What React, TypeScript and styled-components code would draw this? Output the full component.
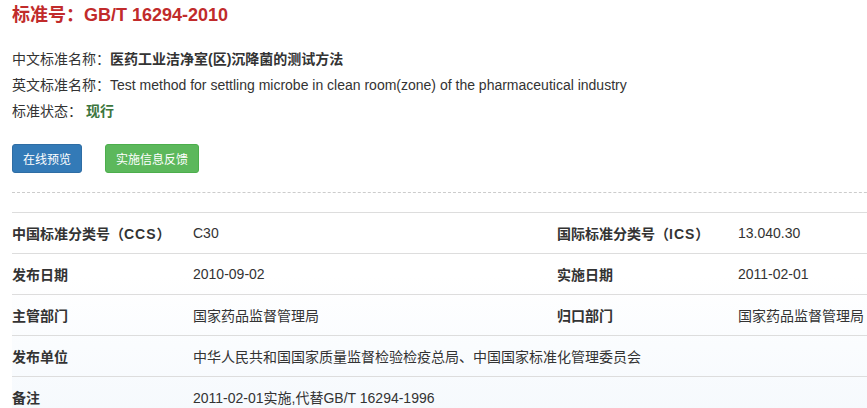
import React from 'react';
import styled, { createGlobalStyle } from 'styled-components';

const GlobalStyle = createGlobalStyle`
  html, body {
    margin: 0;
    padding: 0;
    background: #fff;
    overflow: hidden;
  }
  body {
    font-family: "Liberation Sans", Arial, "Noto Sans CJK SC", sans-serif;
    color: #333;
    font-size: 14px;
  }
`;

const Page = styled.div`
  width: 867px;
  height: 408px;
  overflow: hidden;
  padding-left: 12px;
  box-sizing: border-box;
`;

const Title = styled.h3`
  margin: 0;
  font-size: 18px;
  line-height: 30px;
  font-weight: bold;
  color: #c12b2b;
`;

const InfoList = styled.div`
  margin-top: 16px;
`;

const InfoLine = styled.div`
  line-height: 26px;
  white-space: nowrap;
`;

const Strong = styled.span<{ $color?: string }>`
  font-weight: bold;
  color: ${({ $color }) => $color || '#333'};
`;

const Actions = styled.div`
  display: flex;
  gap: 23px;
  margin-top: 20px;
`;

const Button = styled.button<{ $variant: 'primary' | 'success' }>`
  height: 29px;
  padding: 0 10px;
  font-family: inherit;
  font-size: 12px;
  color: #fff;
  border-radius: 3px;
  cursor: pointer;
  background: ${({ $variant }) => ($variant === 'primary' ? '#337ab7' : '#5cb85c')};
  border: 1px solid ${({ $variant }) => ($variant === 'primary' ? '#2e6da4' : '#4cae4c')};
`;

const Divider = styled.hr`
  margin: 19px 0 0;
  border: 0;
  border-top: 1px dashed #ccc;
  width: 900px;
`;

const Table = styled.table`
  margin-top: 19px;
  border-collapse: collapse;
  width: 1000px;
  table-layout: fixed;
`;

const Body = styled.tbody`
  background: linear-gradient(to bottom, #fff 0%, #fff 30%, #f5f9fd 100%);
`;

const Row = styled.tr`
  height: 41px;
  border-top: 1px solid #ddd;
`;

const Cell = styled.td<{ $label?: boolean }>`
  padding: 0;
  vertical-align: middle;
  font-weight: ${({ $label }) => ($label ? 'bold' : 'normal')};
  color: #333;
  white-space: nowrap;
`;

const Spaced = styled.span`
  letter-spacing: 1px;
`;

export default function App() {
  return (
    <Page>
      <GlobalStyle />
      <Title>标准号：GB/T 16294-2010</Title>
      <InfoList>
        <InfoLine>
          中文标准名称：<Strong>医药工业洁净室(区)沉降菌的测试方法</Strong>
        </InfoLine>
        <InfoLine>
          英文标准名称：Test method for settling microbe in clean room(zone) of the pharmaceutical industry
        </InfoLine>
        <InfoLine>
          标准状态：&nbsp;<Strong $color="#3c763d">现行</Strong>
        </InfoLine>
      </InfoList>
      <Actions>
        <Button $variant="primary">在线预览</Button>
        <Button $variant="success">实施信息反馈</Button>
      </Actions>
      <Divider />
      <Table>
        <colgroup>
          <col style={{ width: 181 }} />
          <col style={{ width: 364 }} />
          <col style={{ width: 181 }} />
          <col />
        </colgroup>
        <Body>
          <Row>
            <Cell $label>
              中国标准分类号（<Spaced>CCS</Spaced>）
            </Cell>
            <Cell>C30</Cell>
            <Cell $label>
              国际标准分类号（<Spaced>ICS</Spaced>）
            </Cell>
            <Cell>13.040.30</Cell>
          </Row>
          <Row>
            <Cell $label>发布日期</Cell>
            <Cell>2010-09-02</Cell>
            <Cell $label>实施日期</Cell>
            <Cell>2011-02-01</Cell>
          </Row>
          <Row>
            <Cell $label>主管部门</Cell>
            <Cell>国家药品监督管理局</Cell>
            <Cell $label>归口部门</Cell>
            <Cell>国家药品监督管理局</Cell>
          </Row>
          <Row>
            <Cell $label>发布单位</Cell>
            <Cell colSpan={3}>中华人民共和国国家质量监督检验检疫总局、中国国家标准化管理委员会</Cell>
          </Row>
          <Row>
            <Cell $label>备注</Cell>
            <Cell colSpan={3}>2011-02-01实施,代替GB/T 16294-1996</Cell>
          </Row>
        </Body>
      </Table>
    </Page>
  );
}
